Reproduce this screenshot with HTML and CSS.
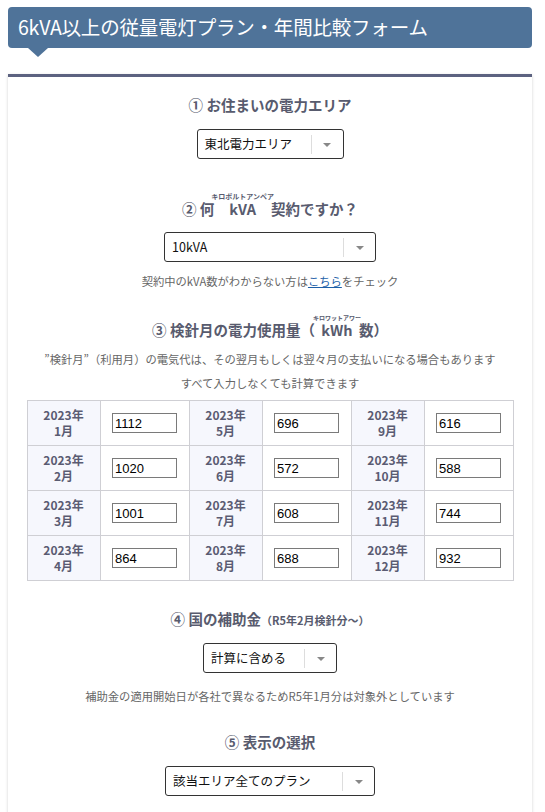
FILE: index.html
```html
<!DOCTYPE html>
<html lang="ja">
<head>
<meta charset="utf-8">
<title>6kVA以上の従量電灯プラン・年間比較フォーム</title>
<link rel="stylesheet" href="styles.css">
</head>
<body>
<div class="page">
  <h1 class="title">6kVA以上の従量電灯プラン・年間比較フォーム</h1>
  <div class="card">
    <h2 class="heading h-area">① お住まいの電力エリア</h2>
    <div class="select w-area"><span class="value">東北電力エリア</span><span class="sep"></span><span class="arrow"></span></div>

    <h2 class="heading h-kva">② 何<ruby class="rb1">kVA<rt>キロボルトアンペア</rt></ruby>契約ですか？</h2>
    <div class="select w-kva"><span class="value">10kVA</span><span class="sep"></span><span class="arrow"></span></div>
    <p class="note note-kva">契約中のkVA数がわからない方は<a href="#" class="link">こちら</a>をチェック</p>

    <h2 class="heading h-use">③ 検針月の電力使用量（<ruby class="rb2">kWh<rt>キロワットアワー</rt></ruby>数）</h2>
    <p class="note note-first">”検針月”（利用月）の電気代は、その翌月もしくは翌々月の支払いになる場合もあります</p>
    <p class="note">すべて入力しなくても計算できます</p>

    <table class="usage">
      <tr>
        <th>2023年<br>1月</th><td><input class="num" type="text" value="1112"></td>
        <th>2023年<br>5月</th><td><input class="num" type="text" value="696"></td>
        <th>2023年<br>9月</th><td><input class="num" type="text" value="616"></td>
      </tr>
      <tr>
        <th>2023年<br>2月</th><td><input class="num" type="text" value="1020"></td>
        <th>2023年<br>6月</th><td><input class="num" type="text" value="572"></td>
        <th>2023年<br>10月</th><td><input class="num" type="text" value="588"></td>
      </tr>
      <tr>
        <th>2023年<br>3月</th><td><input class="num" type="text" value="1001"></td>
        <th>2023年<br>7月</th><td><input class="num" type="text" value="608"></td>
        <th>2023年<br>11月</th><td><input class="num" type="text" value="744"></td>
      </tr>
      <tr>
        <th>2023年<br>4月</th><td><input class="num" type="text" value="864"></td>
        <th>2023年<br>8月</th><td><input class="num" type="text" value="688"></td>
        <th>2023年<br>12月</th><td><input class="num" type="text" value="932"></td>
      </tr>
    </table>

    <h2 class="heading h-sub">④ 国の補助金<span class="small">（R5年2月検針分〜）</span></h2>
    <div class="select w-sub"><span class="value">計算に含める</span><span class="sep"></span><span class="arrow"></span></div>
    <p class="note note-sub">補助金の適用開始日が各社で異なるためR5年1月分は対象外としています</p>

    <h2 class="heading h-disp">⑤ 表示の選択</h2>
    <div class="select w-disp"><span class="value">該当エリア全てのプラン</span><span class="sep"></span><span class="arrow"></span></div>
  </div>
</div>
</body>
</html>
```
FILE: styles.css
```css
* { box-sizing: border-box; }
body {
  margin: 0;
  background: #fff;
  font-family: "Noto Sans CJK JP", "Noto Sans", sans-serif;
  color: #333;
}
.page {
  width: 524px;
  margin: 7px 0 0 8px;
}
.title {
  position: relative;
  margin: 0;
  height: 41px;
  line-height: 40px;
  padding-left: 10px;
  background: #4f7399;
  color: #fff;
  font-size: 19.5px;
  font-weight: normal;
  border-radius: 4px;
  letter-spacing: -0.2px;
}
.title::after {
  content: "";
  position: absolute;
  left: 20px;
  top: 100%;
  border-top: 9px solid #4f7399;
  border-left: 10px solid transparent;
  border-right: 10px solid transparent;
}
.card {
  margin-top: 26px;
  border-top: 3px solid #5c6280;
  background: #fff;
  box-shadow: 0 1px 3px rgba(0,0,0,0.18);
  display: flex;
  flex-direction: column;
  align-items: center;
  padding-top: 17px;
  padding-bottom: 40px;
}
.heading {
  margin: 0;
  font-size: 14.5px;
  line-height: 22px;
  font-weight: bold;
  color: #585b6e;
  text-align: center;
}
.heading ruby { ruby-position: over; }
.heading rt {
  font-size: 7px;
  font-weight: bold;
  color: #585b6e;
  line-height: 1;
  padding-bottom: 1px;
}
.rb1 { margin: 0; }
.rb2 rt { font-size: 6px; }
.rb2 { margin: 0 1px; }
.small { font-size: 11px; }
.select {
  display: flex;
  align-items: center;
  height: 30px;
  border: 1px solid #333;
  border-radius: 3px;
  background: #fff;
  padding-left: 7px;
}
.select .value {
  flex: 1;
  font-size: 12.5px;
  line-height: 18px;
  color: #111;
  white-space: nowrap;
}
.select .sep {
  width: 1px;
  height: 19px;
  background: #ddd;
}
.select .arrow {
  width: 31px;
  display: flex;
  justify-content: center;
}
.select .arrow::before {
  content: "";
  border-top: 4px solid #888;
  border-left: 4px solid transparent;
  border-right: 4px solid transparent;
  margin-top: 2px;
}
.w-area { width: 147px; margin-top: 13px; }
.w-kva { width: 212px; margin-top: 12px; }
.w-sub { width: 134px; margin-top: 12px; }
.w-disp { width: 210px; margin-top: 13px; }
.h-kva { margin-top: 32px; }
.h-use { margin-top: 20px; }
.h-sub { margin-top: 27px; }
.h-disp { margin-top: 23px; }
.note {
  margin: 0;
  font-size: 11.3px;
  line-height: 24px;
  color: #666;
  text-align: center;
  white-space: nowrap;
}
.note-kva { margin-top: 7px; }
.note-first { margin-top: 6px; }
.note-sub { margin-top: 11px; }
.link { color: #1d5fa8; text-decoration: underline; }
.usage {
  margin-top: 5px;
  border-collapse: collapse;
  width: 487px;
}
.usage th, .usage td {
  border: 1px solid #cfcfd4;
  height: 45px;
  padding: 0;
  text-align: center;
  vertical-align: middle;
}
.usage th {
  width: 73px;
  background: #f6f7fd;
  color: #5a5b72;
  font-size: 12px;
  line-height: 16px;
  font-weight: bold;
}
.usage td { width: 89px; }
.num {
  width: 65px;
  height: 20px;
  border: 1px solid #7a7a7a;
  padding: 0 2px;
  font-family: "Liberation Sans", Arial, sans-serif;
  font-size: 13px;
  color: #000;
  background: #fff;
  display: block;
  margin: 0 auto;
  outline: none;
}
```
